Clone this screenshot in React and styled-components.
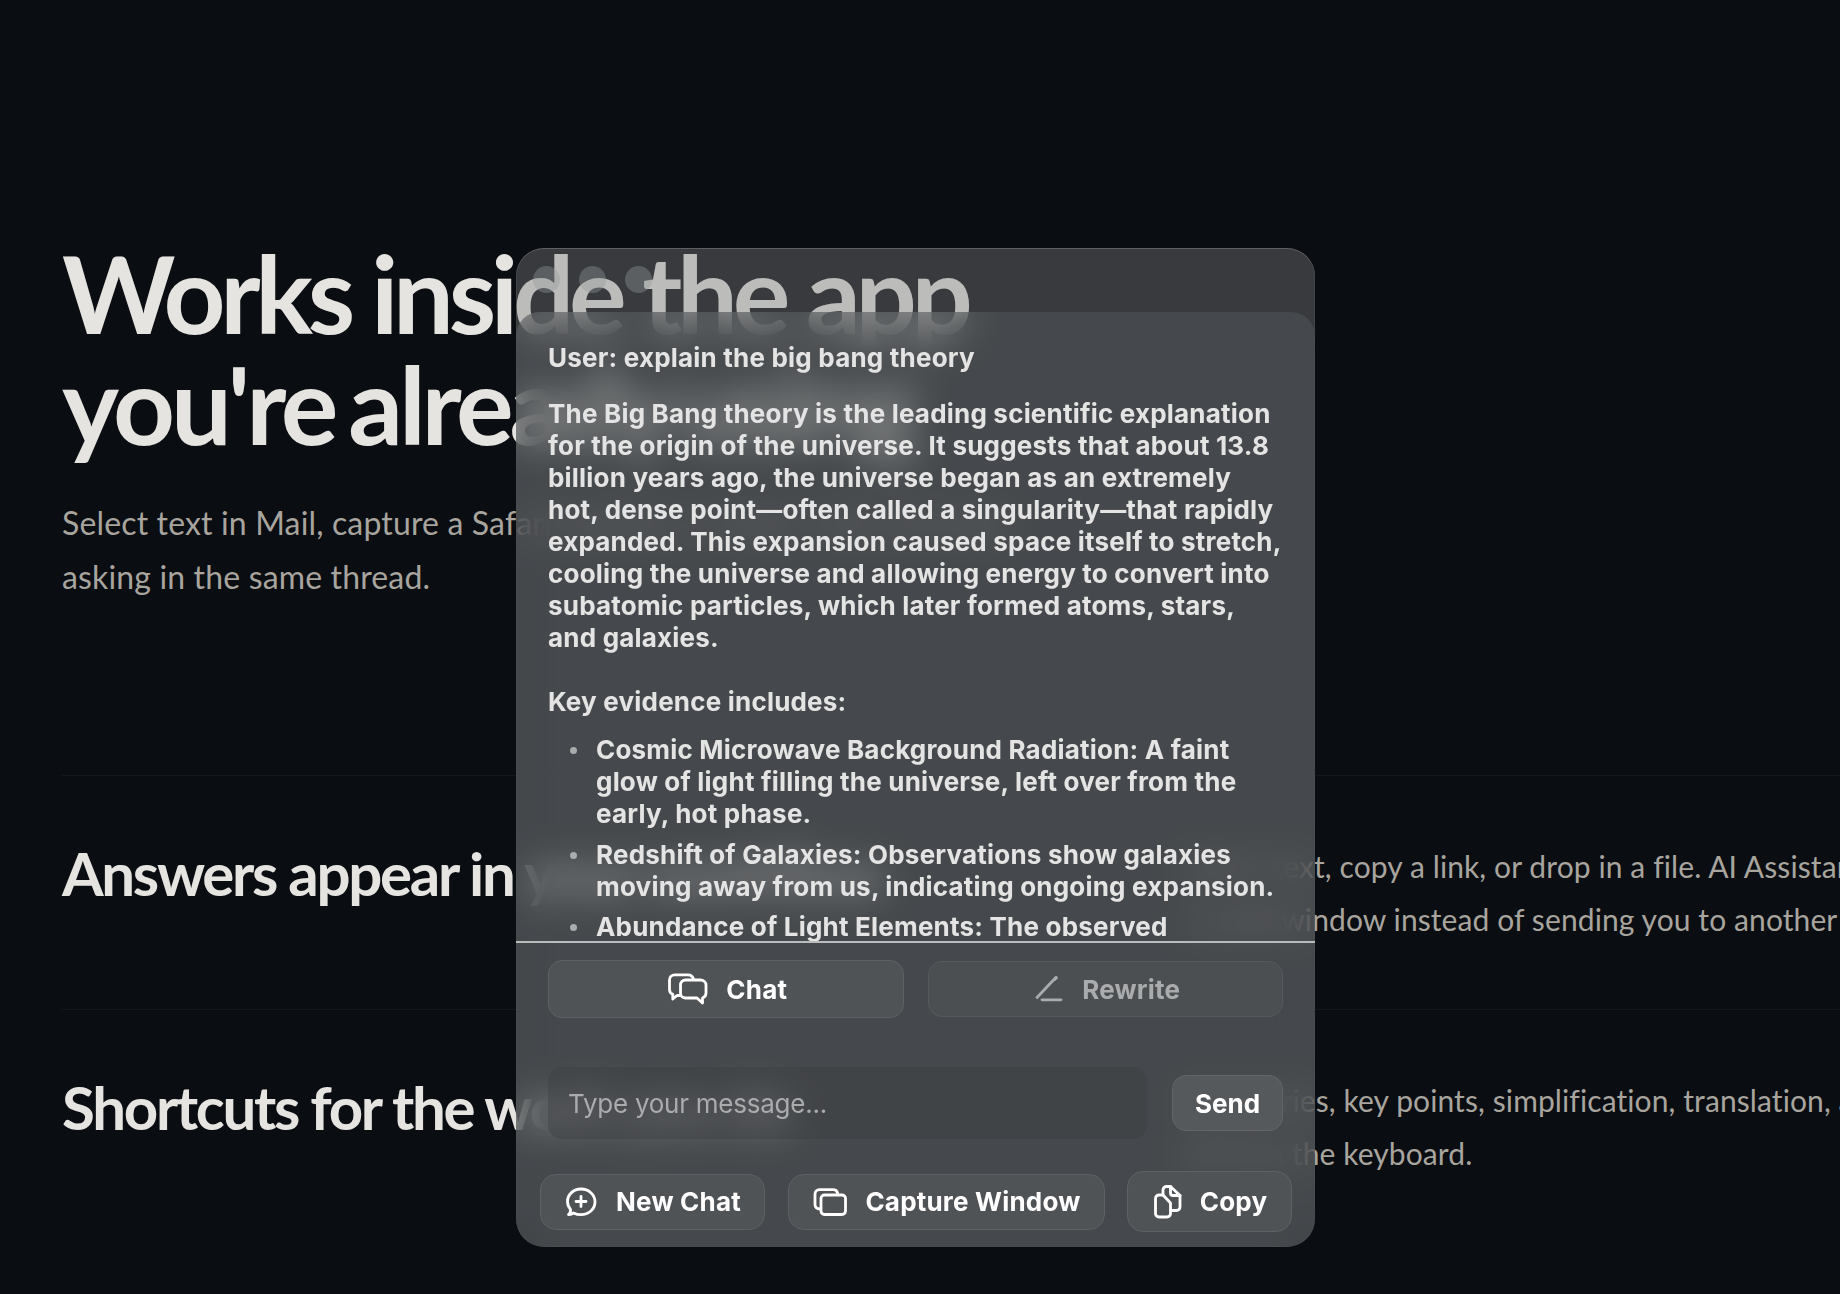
import React from "react";
import styled, { createGlobalStyle } from "styled-components";

const GlobalStyle = createGlobalStyle`
  html, body {
    margin: 0;
    padding: 0;
    background: #0a0d12;
  }
  body {
    width: 1840px;
    height: 1294px;
    overflow: hidden;
  }
`;

const ChatIcon = () => (
  <svg width="40" height="32" viewBox="0 0 40 32" fill="none" stroke="currentColor" strokeWidth="2.8" strokeLinecap="round" strokeLinejoin="round">
    <path d="M12 22.500H9l-4.200 3.500v-4.600C2.800 20.500 1.500 18.600 1.500 16.500V7c0-3 2.400-5.200 5-5.200h13.500c2.800 0 5 2 5.600 4.700" />
    <path d="M17.500 7h15c3 0 5.500 2.200 5.500 5v8c0 2.400-1.400 4.300-3.500 5v5l-5.500-5H17.500c-3 0-5-2.200-5-5v-8c0-2.800 2-5 5-5z" />
  </svg>
);

const PenIcon = () => (
  <svg width="30" height="26" viewBox="0 0 30 26" fill="none" stroke="currentColor" strokeWidth="2.800" strokeLinecap="round" strokeLinejoin="round">
    <path d="M3 21.500 19 4.500" />
    <path d="M20.500 3.200 22 1.800" strokeWidth="3.600" />
    <path d="M8 23.800h19" />
  </svg>
);

const PlusBubbleIcon = () => (
  <svg width="32" height="30" viewBox="0 0 32 30" fill="none" stroke="currentColor" strokeWidth="2.800" strokeLinecap="round" strokeLinejoin="round">
    <path d="M2.500 27.500c1.800.2 3.600-.4 5-1.600 2.300 1.200 4.900 1.800 7.500 1.800 7.500 0 14-5.500 14-12.800C29 7.500 22.700 2 15 2 7.500 2 1.500 7.500 1.500 14.500c0 3 1.100 5.700 3 7.900.3 2-.6 3.800-2 5.100z" />
    <path d="M15 9.500v10M10 14.500h10" />
  </svg>
);

const WindowsIcon = () => (
  <svg width="34" height="28" viewBox="0 0 34 28" fill="none" stroke="currentColor" strokeWidth="2.800" strokeLinecap="round" strokeLinejoin="round">
    <path d="M7 21c-3 0-5-1.500-5-4.500V6c0-2.500 1.800-4.300 4.500-4.300H20c2.400 0 4 1.200 4.600 3.300" />
    <rect x="8" y="7" width="24.500" height="19.500" rx="3.500" />
  </svg>
);

const DocsIcon = () => (
  <svg width="28" height="34" viewBox="0 0 28 34" fill="none" stroke="currentColor" strokeWidth="2.800" strokeLinecap="round" strokeLinejoin="round">
    <path d="M9 10H5c-2 0-3.500 1.500-3.500 3.500V28.500c0 2 1.500 3.500 3.500 3.500h8c2 0 3.500-1.500 3.500-3.500V18l-7.500-8z" />
    <path d="M9 10V5c0-2 1.500-3.500 3.500-3.500h4L26 10.500v11.500c0 2-1.500 3.500-3.500 3.500h-6" />
    <path d="M16.500 1.500V8c0 1.500 1 2.500 2.500 2.500h7" />
  </svg>
);

const App = () => {
  return (
    <>
      <GlobalStyle />
      <Page>
        <Hero>
          <HeroTitle>
            Works inside the app
            <br />
            <TitleTail>you're already using</TitleTail>
          </HeroTitle>
          <HeroText>
            Select text in Mail, capture a Safari window, or open a file and keep
            <br />
            asking in the same thread.
          </HeroText>
        </Hero>
        <FeatureRow>
          <FeatureTitle>Answers appear in your workflow</FeatureTitle>
          <FeatureText>
            Select text, copy a link, or drop in a file. AI Assistant responds in
            <br />
            a small window instead of sending you to another app.
          </FeatureText>
        </FeatureRow>
        <FeatureRow>
          <FeatureTitle>Shortcuts for the work you do</FeatureTitle>
          <FeatureText>
            Summaries, key points, simplification, translation, and more,
            <br />
            all from the keyboard.
          </FeatureText>
        </FeatureRow>

        <Panel>
          <TitleBar>
            <Light />
            <Light />
            <Light />
          </TitleBar>
          <Sheet>
            <Transcript>
              <div>User: explain the big bang theory</div>
              <Answer>
                The Big Bang theory is the leading scientific explanation for the origin of the universe. It suggests that about 13.8 billion years ago, the universe began as an extremely hot, dense point—often called a singularity—that rapidly expanded. This expansion caused space itself to stretch, cooling the universe and allowing energy to convert into subatomic particles, which later formed atoms, stars, and galaxies.
              </Answer>
              <Answer $gap="32px">Key evidence includes:</Answer>
              <Bullets>
                <li>Cosmic Microwave Background Radiation: A faint glow of light filling the universe, left over from the early, hot phase.</li>
                <li>Redshift of Galaxies: Observations show galaxies moving away from us, indicating ongoing expansion.</li>
                <li>Abundance of Light Elements: The observed amounts of hydrogen and helium match predictions.</li>
              </Bullets>
            </Transcript>
            <Tabs>
              <Tab $active>
                <ChatIcon />
                Chat
              </Tab>
              <Tab>
                <PenIcon />
                Rewrite
              </Tab>
            </Tabs>
            <Composer>
              <MessageField>Type your message...</MessageField>
              <SendButton>Send</SendButton>
            </Composer>
            <Actions>
              <ActionButton $width="225px">
                <PlusBubbleIcon />
                New Chat
              </ActionButton>
              <ActionButton $width="317px">
                <WindowsIcon />
                Capture Window
              </ActionButton>
              <ActionButton $width="165px" $tall>
                <DocsIcon />
                Copy
              </ActionButton>
            </Actions>
          </Sheet>
        </Panel>
      </Page>
    </>
  );
};

const Page = styled.main`
  position: relative;
  width: 1840px;
  height: 1294px;
  overflow: hidden;
  background: #0a0d12;
  padding: 237px 0 0 62px;
  box-sizing: border-box;
  font-family: "Lato", "Liberation Sans", sans-serif;
`;

const Hero = styled.section`
  height: 538px;
`;

const HeroTitle = styled.h1`
  margin: 0;
  font-size: 108px;
  line-height: 111px;
  font-weight: 700;
  letter-spacing: -5.3px;
  color: #e6e4e0;
  white-space: nowrap;
`;

const TitleTail = styled.span`
  letter-spacing: -4.2px;
  word-spacing: -8px;
`;

const HeroText = styled.p`
  margin: 37px 0 0;
  font-size: 32px;
  line-height: 54px;
  letter-spacing: 0.15px;
  font-weight: 400;
  color: #a8a49e;
  white-space: nowrap;
`;

const FeatureRow = styled.section`
  display: grid;
  grid-template-columns: 1122px 1fr;
  width: 1778px;
  height: 234px;
  padding-top: 64px;
  box-sizing: border-box;
  border-top: 1px solid #14171b;
`;

const FeatureTitle = styled.h2`
  margin: 0;
  font-size: 60px;
  line-height: 66px;
  font-weight: 700;
  letter-spacing: -2.3px;
  color: #e6e4e0;
  white-space: nowrap;
`;

const FeatureText = styled.p`
  margin: 0;
  font-size: 30px;
  line-height: 53px;
  letter-spacing: 0.1px;
  font-weight: 400;
  color: #a8a49e;
  white-space: nowrap;
`;

const Panel = styled.aside`
  position: absolute;
  left: 516px;
  top: 248px;
  width: 799px;
  height: 999px;
  border-radius: 28px;
  overflow: hidden;
  background: rgba(125, 127, 130, 0.4);
  box-shadow: inset 0 1px 0 rgba(255, 255, 255, 0.14), inset 0 0 0 1px rgba(255, 255, 255, 0.06);
  font-family: "Inter", "Liberation Sans", sans-serif;
  display: flex;
  flex-direction: column;
`;

const TitleBar = styled.header`
  height: 64px;
  flex: none;
  display: flex;
  gap: 19px;
  padding: 18px 0 0 17px;
  box-sizing: border-box;
`;

const Light = styled.span`
  width: 27px;
  height: 27px;
  border-radius: 50%;
  background: rgba(150, 155, 155, 0.38);
`;

const Sheet = styled.div`
  flex: 1;
  display: flex;
  flex-direction: column;
  min-height: 0;
  border-radius: 24px 24px 0 0;
  background: rgba(87, 90, 93, 0.45);
  backdrop-filter: blur(18px);
`;

const Transcript = styled.div`
  height: 631px;
  flex: none;
  overflow: hidden;
  box-sizing: border-box;
  padding: 30px 32px 0 32px;
  border-bottom: 2px solid #b9bbbc;
  font-size: 26px;
  line-height: 32px;
  font-weight: 700;
  letter-spacing: 0.2px;
  color: #e4e4e4;
`;

const Answer = styled.p`
  margin: ${(props) => props.$gap || "24px"} 0 0;
`;

const Bullets = styled.ul`
  margin: 16px 0 0;
  padding: 0 0 0 48px;
  list-style: none;

  li {
    position: relative;
    margin-bottom: 8.5px;
  }

  li::before {
    content: "";
    position: absolute;
    left: -26px;
    top: 13px;
    width: 7px;
    height: 7px;
    border-radius: 50%;
    background: #a9abac;
  }
`;

const Tabs = styled.div`
  display: flex;
  align-items: center;
  gap: 24px;
  padding: 17px 32px 0;
`;

const Tab = styled.button`
  flex: 1;
  height: ${(props) => (props.$active ? "58px" : "56px")};
  display: flex;
  align-items: center;
  justify-content: center;
  gap: 18px;
  padding: 0 0 0 4px;
  border-radius: 14px;
  border: 1px solid ${(props) => (props.$active ? "#5e6164" : "#56595c")};
  background: ${(props) => (props.$active ? "#505356" : "#4c4f52")};
  color: ${(props) => (props.$active ? "#ffffff" : "#a9abac")};
  font: 700 26px "Inter", sans-serif;
  letter-spacing: 0.2px;
`;

const Composer = styled.div`
  display: flex;
  align-items: center;
  gap: 25px;
  padding: 49px 32px 0;
`;

const MessageField = styled.div`
  flex: 1;
  height: 72px;
  display: flex;
  align-items: center;
  padding-left: 20px;
  box-sizing: border-box;
  border-radius: 14px;
  background: rgba(60, 62, 66, 0.4);
  color: #a9abac;
  font-size: 26px;
  font-weight: 400;
  letter-spacing: -0.25px;
`;

const SendButton = styled.button`
  width: 111px;
  height: 56px;
  border-radius: 14px;
  border: 1px solid #626568;
  background: #56595c;
  color: #ffffff;
  font: 700 26px "Inter", sans-serif;
`;

const Actions = styled.div`
  display: flex;
  align-items: center;
  justify-content: space-between;
  padding: 32px 23px 0 24px;
`;

const ActionButton = styled.button`
  width: ${(props) => props.$width};
  height: ${(props) => (props.$tall ? "61px" : "56px")};
  display: flex;
  align-items: center;
  justify-content: center;
  gap: 18px;
  padding: 0 0 0 2px;
  border-radius: 16px;
  border: 1px solid #5e6164;
  background: #505356;
  color: #ffffff;
  font: 700 26px "Inter", sans-serif;
  letter-spacing: 0.2px;
  white-space: nowrap;
`;

export default App;
